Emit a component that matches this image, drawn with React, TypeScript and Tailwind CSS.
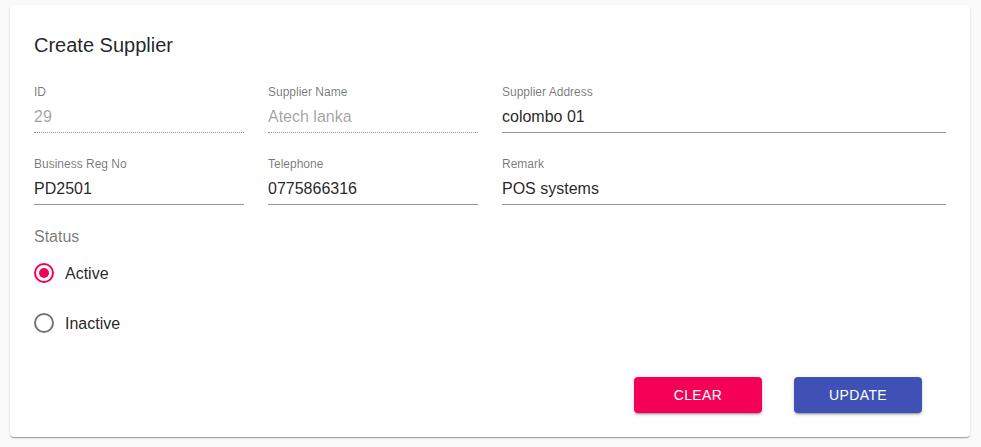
import React from "react";

function Field({
  label,
  value,
  disabled,
}: {
  label: string;
  value: string;
  disabled?: boolean;
}) {
  return (
    <div className="flex flex-col">
      <div className="h-4 text-[12px] leading-[14px] text-[rgba(0,0,0,0.54)]">{label}</div>
      <div
        className={
          "h-[32px] pt-[6px] pb-[7px] text-[16px] leading-[19px] " +
          (disabled
            ? "text-[rgba(0,0,0,0.38)] border-b border-dotted border-[rgba(0,0,0,0.42)]"
            : "text-[rgba(0,0,0,0.87)] border-b border-[rgba(0,0,0,0.42)]")
        }
      >
        {value}
      </div>
    </div>
  );
}

function Radio({ checked, label }: { checked?: boolean; label: string }) {
  return (
    <div className="flex h-[42px] items-center">
      <div
        className={
          "flex h-5 w-5 items-center justify-center rounded-full border-2 " +
          (checked ? "border-[#f50057]" : "border-[rgba(0,0,0,0.54)]")
        }
      >
        {checked && <div className="h-[10px] w-[10px] rounded-full bg-[#f50057]" />}
      </div>
      <span className="ml-[11px] text-[16px] leading-[19px] text-[rgba(0,0,0,0.87)]">{label}</span>
    </div>
  );
}

export default function App() {
  return (
    <div
      className="min-h-[447px] w-full bg-[#fafafa] pl-[10px] pt-[5px]"
      style={{ fontFamily: '"Liberation Sans", Arial, sans-serif' }}
    >
      <div className="h-[432px] w-[960px] rounded bg-white px-6 pt-6 shadow-[0px_2px_1px_-1px_rgba(0,0,0,0.2),0px_1px_1px_0px_rgba(0,0,0,0.14),0px_1px_3px_0px_rgba(0,0,0,0.12)]">
        <h2 className="h-8 text-[20px] leading-8 text-[rgba(0,0,0,0.87)]">Create Supplier</h2>
        <div className="mt-[24px] grid grid-cols-[210px_210px_1fr] gap-x-6 gap-y-6">
          <Field label="ID" value="29" disabled />
          <Field label="Supplier Name" value="Atech lanka" disabled />
          <Field label="Supplier Address" value="colombo 01" />
          <Field label="Business Reg No" value="PD2501" />
          <Field label="Telephone" value="0775866316" />
          <Field label="Remark" value="POS systems" />
        </div>
        <div className="mt-[22px] text-[16px] leading-[19px] text-[rgba(0,0,0,0.54)]">Status</div>
        <div className="mt-[6px] flex flex-col gap-2">
          <Radio checked label="Active" />
          <Radio label="Inactive" />
        </div>
        <div className="mt-[33px] flex justify-end gap-8 pr-6">
          <button className="h-9 w-32 rounded bg-[#f50057] text-[14px] uppercase tracking-[0.4px] text-white shadow-[0px_3px_1px_-2px_rgba(0,0,0,0.2),0px_2px_2px_0px_rgba(0,0,0,0.14),0px_1px_5px_0px_rgba(0,0,0,0.12)]">
            Clear
          </button>
          <button className="h-9 w-32 rounded bg-[#3f51b5] text-[14px] uppercase tracking-[0.4px] text-white shadow-[0px_3px_1px_-2px_rgba(0,0,0,0.2),0px_2px_2px_0px_rgba(0,0,0,0.14),0px_1px_5px_0px_rgba(0,0,0,0.12)]">
            Update
          </button>
        </div>
      </div>
    </div>
  );
}
